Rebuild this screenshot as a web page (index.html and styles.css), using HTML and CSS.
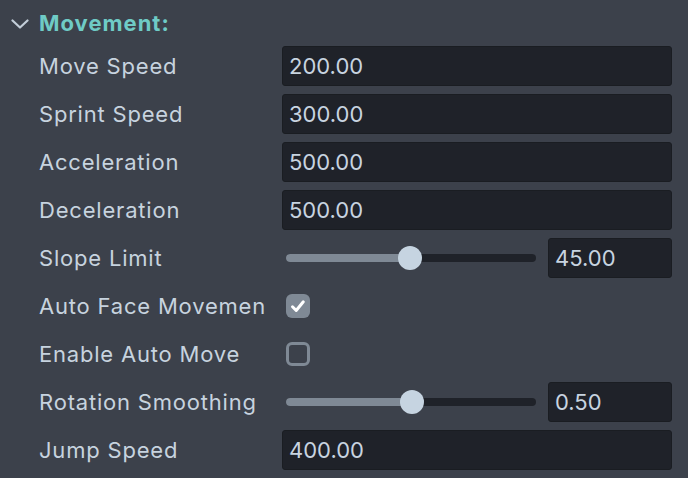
FILE: index.html
```html
<!DOCTYPE html>
<html>
<head>
<meta charset="utf-8">
<link rel="stylesheet" href="styles.css">
</head>
<body>
<div class="panel">
  <div class="header">
    <svg class="chevron" width="18" height="10" viewBox="0 0 18 10"><path d="M1.5 1.5 L9 8.5 L16.5 1.5" fill="none" stroke="#c3ced9" stroke-width="2.2" stroke-linecap="round" stroke-linejoin="round"/></svg>
    <span class="title">Movement:</span>
  </div>
  <div class="rows">
    <div class="label">Move Speed</div>
    <div class="control"><div class="field">200.00</div></div>

    <div class="label">Sprint Speed</div>
    <div class="control"><div class="field">300.00</div></div>

    <div class="label">Acceleration</div>
    <div class="control"><div class="field">500.00</div></div>

    <div class="label">Deceleration</div>
    <div class="control"><div class="field">500.00</div></div>

    <div class="label">Slope Limit</div>
    <div class="control slider-row">
      <div class="slider"><div class="track"><div class="fill" style="width:124px"></div><div class="thumb" style="left:124px"></div></div></div>
      <div class="field small">45.00</div>
    </div>

    <div class="label">Auto Face Movemen</div>
    <div class="control">
      <div class="check checked"><svg width="24" height="24" viewBox="0 0 24 24"><path d="M6.5 12.8 L10.2 16.5 L17.3 7.8" fill="none" stroke="#ffffff" stroke-width="3" stroke-linecap="round" stroke-linejoin="round"/></svg></div>
    </div>

    <div class="label">Enable Auto Move</div>
    <div class="control"><div class="check"></div></div>

    <div class="label">Rotation Smoothing</div>
    <div class="control slider-row">
      <div class="slider"><div class="track"><div class="fill" style="width:126px"></div><div class="thumb" style="left:126px"></div></div></div>
      <div class="field small">0.50</div>
    </div>

    <div class="label">Jump Speed</div>
    <div class="control"><div class="field">400.00</div></div>
  </div>
</div>
</body>
</html>
```

FILE: styles.css
```css
html, body {
  margin: 0;
  padding: 0;
  background: #3c414b;
  width: 688px;
  height: 478px;
  overflow: hidden;
}
.panel {
  padding: 4px 16px 0 11px;
  font-family: Inter, "Noto Sans", sans-serif;
  color: #c7d3df;
}
.header {
  display: flex;
  align-items: center;
  height: 38px;
  gap: 10px;
}
.chevron {
  display: block;
  margin-top: 2px;
}
.title {
  color: #6fcbc6;
  font-weight: 700;
  font-size: 22px;
  letter-spacing: 1px;
}
.rows {
  margin-top: 4px;
  padding-left: 28px;
  display: grid;
  grid-template-columns: 243px 1fr;
  grid-auto-rows: 40px;
  row-gap: 8px;
}
.label {
  display: flex;
  align-items: center;
  font-size: 22px;
  letter-spacing: 0.8px;
  white-space: nowrap;
  overflow: hidden;
  padding-bottom: 1px;
  box-sizing: border-box;
}
.control {
  display: flex;
  align-items: center;
}
.field {
  flex: 1;
  height: 40px;
  box-sizing: border-box;
  background: #1f2229;
  border: 1px solid #1a1d22;
  border-radius: 3px;
  display: flex;
  align-items: center;
  padding-left: 6px;
  font-size: 22px;
  color: #c8d4e0;
}
.field.small {
  flex: 0 0 124px;
}
.slider-row {
  gap: 8px;
}
.slider {
  width: 258px;
  height: 40px;
  display: flex;
  align-items: center;
  padding: 0 4px;
  box-sizing: border-box;
}
.track {
  position: relative;
  width: 100%;
  height: 8px;
  border-radius: 4px;
  background: #1f2229;
}
.fill {
  height: 8px;
  border-radius: 4px 0 0 4px;
  background: #7f8995;
}
.thumb {
  position: absolute;
  top: -8px;
  width: 24px;
  height: 24px;
  margin-left: -12px;
  border-radius: 50%;
  background: #c6d4e1;
}
.check {
  margin-left: 4px;
  width: 24px;
  height: 24px;
  box-sizing: border-box;
  border: 3px solid #7f8995;
  border-radius: 6px;
}
.check.checked {
  border: none;
  background: #7f8995;
}
.check svg {
  display: block;
}
```
